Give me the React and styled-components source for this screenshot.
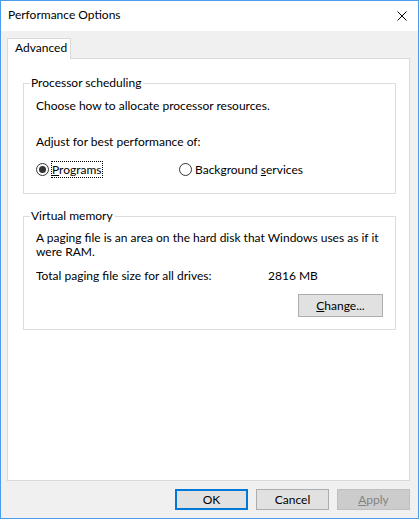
import React from "react";
import styled, { createGlobalStyle } from "styled-components";

const GlobalStyle = createGlobalStyle`
  html, body { margin: 0; padding: 0; background: #ffffff; }
  body {
    font-family: "Lato", "Liberation Sans", sans-serif;
    font-size: 12px;
    color: #000000;
  }
  * { box-sizing: border-box; }
`;

const Window = styled.div`
  width: 419px;
  height: 519px;
  border: 1px solid #4a9cef;
  display: flex;
  flex-direction: column;
  background: #ffffff;
`;

const TitleBar = styled.div`
  height: 30px;
  flex: none;
  display: flex;
  align-items: center;
  justify-content: space-between;
  padding-left: 7px;
  background: #ffffff;
`;

const Title = styled.div`
  line-height: 28px;
  margin-bottom: 2px;
  font-size: 12px;
`;

const CloseButton = styled.div`
  width: 10px;
  height: 10px;
  margin-right: 11px;
  margin-bottom: 1px;
  display: flex;
`;

const Body = styled.div`
  flex: 1;
  display: flex;
  flex-direction: column;
  background: #f0f0f0;
  padding: 7px 8px 8px 6px;
`;

const TabStrip = styled.div`
  display: flex;
  flex: none;
`;

const Tab = styled.div`
  position: relative;
  z-index: 1;
  width: 64px;
  height: 21px;
  margin-bottom: -1px;
  padding: 1px 0 0 7px;
  line-height: 15px;
  background: #ffffff;
  border: 1px solid #d9d9d9;
  border-bottom: none;
`;

const Panel = styled.div`
  height: 423px;
  flex: none;
  background: #ffffff;
  border: 1px solid #d9d9d9;
  padding: 16px 13px 0 15px;
  display: flex;
  flex-direction: column;
`;

const Group = styled.fieldset`
  margin: ${(p) => (p.$first ? "0" : "14px")} 0 0 0;
  padding: 0;
  min-width: 0;
  border: 1px solid #dcdcdc;
`;

const Legend = styled.legend`
  margin-left: 6px;
  padding: 0 2px 0 1px;
  line-height: 16px;
  font-size: 12px;
`;

const GroupContent = styled.div`
  display: flex;
  flex-direction: column;
  padding: 7px 12px ${(p) => p.$bottom}px 12px;
`;

const Line = styled.div`
  line-height: ${(p) => p.$lh || 15}px;
  margin-top: ${(p) => p.$mt || 0}px;
`;

const RadioGroup = styled.div`
  display: grid;
  grid-template-columns: 143px auto;
  margin-top: 13px;
  line-height: 15px;
`;

const RadioOption = styled.label`
  display: flex;
  align-items: center;
  gap: 3px;
`;

const RadioCircle = styled.span`
  width: 13px;
  height: 13px;
  border: 1px solid #333333;
  border-radius: 50%;
  background: #ffffff;
  display: grid;
  place-items: center;
  flex: none;
  &::after {
    content: "";
    width: 7px;
    height: 7px;
    border-radius: 50%;
    background: ${(p) => (p.$checked ? "#333333" : "transparent")};
  }
`;

const RadioText = styled.span`
  outline: ${(p) => (p.$focused ? "1px dotted #000000" : "none")};
`;

const InfoGrid = styled.div`
  display: grid;
  grid-template-columns: 232px auto;
  margin-top: 9px;
  line-height: 15px;
`;

const Button = styled.div`
  width: ${(p) => p.$w}px;
  height: ${(p) => p.$h}px;
  display: flex;
  align-items: center;
  justify-content: center;
  font-size: 12px;
  background: ${(p) => (p.$disabled ? "#cccccc" : "#e1e1e1")};
  color: ${(p) => (p.$disabled ? "#838383" : "#000000")};
  border: ${(p) =>
    p.$default ? "2px solid #0078d7" : p.$disabled ? "1px solid #bfbfbf" : "1px solid #adadad"};
`;

const ChangeButton = styled(Button)`
  align-self: flex-end;
  margin-top: 11px;
`;

const ButtonRow = styled.div`
  display: flex;
  justify-content: flex-end;
  gap: 8px;
  margin-top: 8px;
`;

export default function App() {
  return (
    <>
      <GlobalStyle />
      <Window>
        <TitleBar>
          <Title>Performance Options</Title>
          <CloseButton>
            <svg width="10" height="10" viewBox="0 0 10 10">
              <path d="M0.5 0.5 L9.5 9.5 M9.5 0.5 L0.5 9.5" stroke="#000" strokeWidth="1" fill="none" />
            </svg>
          </CloseButton>
        </TitleBar>
        <Body>
          <TabStrip>
            <Tab>Advanced</Tab>
          </TabStrip>
          <Panel>
            <Group $first>
              <Legend>Processor scheduling</Legend>
              <GroupContent $bottom={16}>
                <Line>Choose how to allocate processor resources.</Line>
                <Line $mt={21}>Adjust for best performance of:</Line>
                <RadioGroup>
                  <RadioOption>
                    <RadioCircle $checked />
                    <RadioText $focused>
                      <u>P</u>rograms
                    </RadioText>
                  </RadioOption>
                  <RadioOption>
                    <RadioCircle />
                    <RadioText>
                      Background <u>s</u>ervices
                    </RadioText>
                  </RadioOption>
                </RadioGroup>
              </GroupContent>
            </Group>
            <Group>
              <Legend>Virtual memory</Legend>
              <GroupContent $bottom={12}>
                <Line $lh={14}>
                  A paging file is an area on the hard disk that Windows uses as if it were RAM.
                </Line>
                <InfoGrid>
                  <span>Total paging file size for all drives:</span>
                  <span>2816 MB</span>
                </InfoGrid>
                <ChangeButton $w={85} $h={23}>
                  <span>
                    <u>C</u>hange...
                  </span>
                </ChangeButton>
              </GroupContent>
            </Group>
          </Panel>
          <ButtonRow>
            <Button $w={73} $h={21} $default>
              OK
            </Button>
            <Button $w={73} $h={21}>
              Cancel
            </Button>
            <Button $w={73} $h={21} $disabled>
              <span>
                <u>A</u>pply
              </span>
            </Button>
          </ButtonRow>
        </Body>
      </Window>
    </>
  );
}
